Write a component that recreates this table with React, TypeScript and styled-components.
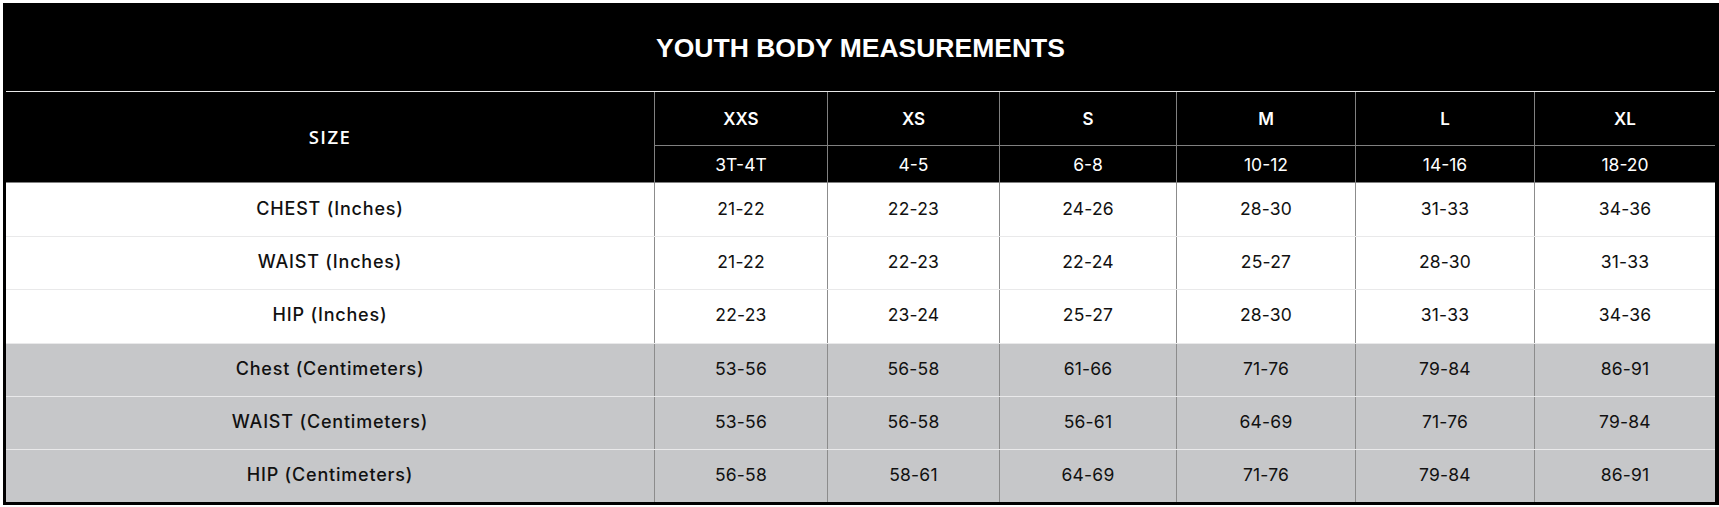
import { FC } from "react";
import styled, { createGlobalStyle } from "styled-components";

const GlobalStyle = createGlobalStyle`
  html, body {
    margin: 0;
    background: #fff;
  }
  body {
    padding: 3px 0 0 3px;
    overflow: hidden;
  }
`;

const COLUMNS = "648px 173px 172px 177px 179px 179px 181px";

const Chart = styled.div`
  width: 1716px;
  box-sizing: border-box;
  border: 3px solid #000;
  border-right-width: 4px;
  font-family: Inter, "Open Sans", sans-serif;
`;

const Title = styled.h2`
  margin: 0;
  height: 86px;
  box-sizing: border-box;
  display: flex;
  align-items: center;
  justify-content: center;
  background: #000;
  color: #fff;
  border-bottom: 1px solid #e8e8e8;
  font-family: "Liberation Sans", Arial, sans-serif;
  font-weight: bold;
  font-size: 26.5px;
  text-transform: uppercase;
`;

const Head = styled.div`
  display: grid;
  grid-template-columns: ${COLUMNS};
  grid-template-rows: 54px 36px;
  background: #000;
  color: #fff;
  border-bottom: 1px solid #808080;
`;

const SizeLabel = styled.div`
  grid-row: span 2;
  display: flex;
  align-items: center;
  justify-content: center;
  padding-bottom: 2px;
  font-family: "Open Sans", sans-serif;
  font-weight: 600;
  font-size: 18.5px;
  letter-spacing: 1.4px;
`;

const SizeName = styled.div`
  display: flex;
  align-items: center;
  justify-content: center;
  box-sizing: border-box;
  border-left: 1px solid #808080;
  border-bottom: 1px solid #808080;
  font-weight: 600;
  font-size: 17px;
`;

const AgeRange = styled.div`
  display: flex;
  align-items: center;
  justify-content: center;
  border-left: 1px solid #808080;
  font-size: 17.5px;
`;

const Body = styled.div`
  display: grid;
  grid-auto-rows: 1fr;
  height: 319px;
`;

const Row = styled.div<{ $metric?: boolean }>`
  display: grid;
  grid-template-columns: ${COLUMNS};
  background: ${(p) => (p.$metric ? "#c6c7c9" : "#fff")};
  color: #111;

  & + & {
    border-top: 1px solid ${(p) => (p.$metric ? "#e9e9ea" : "#e6e6e6")};
  }
`;

const Label = styled.div`
  display: flex;
  align-items: center;
  justify-content: center;
  padding-bottom: 3px;
  font-weight: 500;
  font-size: 18px;
  letter-spacing: 0.8px;
`;

const Value = styled.div`
  display: flex;
  align-items: center;
  justify-content: center;
  padding-bottom: 3px;
  border-left: 1px solid #8c8c8c;
  font-size: 17.5px;
  letter-spacing: 0.2px;
`;

const sizes = [
  { name: "XXS", age: "3T-4T" },
  { name: "XS", age: "4-5" },
  { name: "S", age: "6-8" },
  { name: "M", age: "10-12" },
  { name: "L", age: "14-16" },
  { name: "XL", age: "18-20" },
];

const rows = [
  { label: "CHEST (Inches)", values: ["21-22", "22-23", "24-26", "28-30", "31-33", "34-36"] },
  { label: "WAIST (Inches)", values: ["21-22", "22-23", "22-24", "25-27", "28-30", "31-33"] },
  { label: "HIP (Inches)", values: ["22-23", "23-24", "25-27", "28-30", "31-33", "34-36"] },
  { label: "Chest (Centimeters)", metric: true, values: ["53-56", "56-58", "61-66", "71-76", "79-84", "86-91"] },
  { label: "WAIST (Centimeters)", metric: true, values: ["53-56", "56-58", "56-61", "64-69", "71-76", "79-84"] },
  { label: "HIP (Centimeters)", metric: true, values: ["56-58", "58-61", "64-69", "71-76", "79-84", "86-91"] },
];

const App: FC = () => (
  <>
    <GlobalStyle />
    <Chart>
      <Title>Youth Body Measurements</Title>
      <Head>
        <SizeLabel>SIZE</SizeLabel>
        {sizes.map((s) => (
          <SizeName key={s.name}>{s.name}</SizeName>
        ))}
        {sizes.map((s) => (
          <AgeRange key={s.age}>{s.age}</AgeRange>
        ))}
      </Head>
      <Body>
        {rows.map((r) => (
          <Row key={r.label} $metric={r.metric}>
            <Label>{r.label}</Label>
            {r.values.map((v, i) => (
              <Value key={i}>{v}</Value>
            ))}
          </Row>
        ))}
      </Body>
    </Chart>
  </>
);

export default App;
